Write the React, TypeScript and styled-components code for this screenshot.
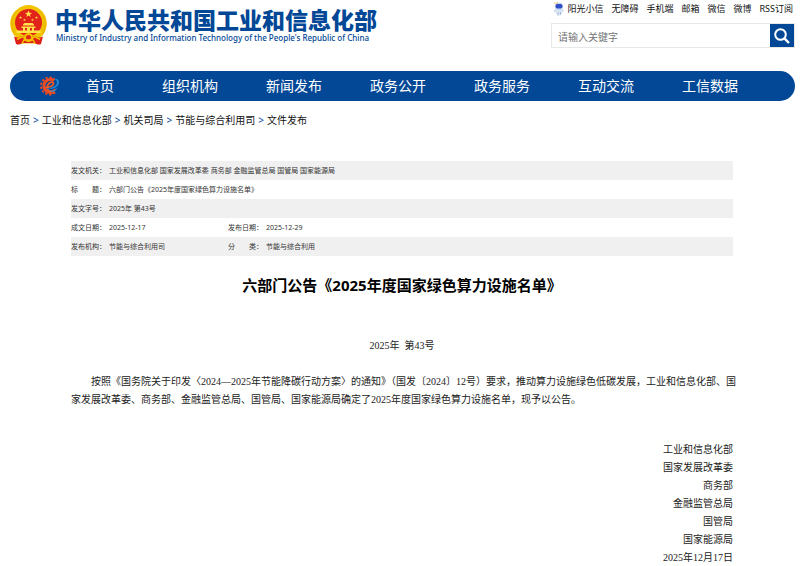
import React from "react";
import styled, { createGlobalStyle } from "styled-components";

const BLUE = "#024897";
const SANS = '"Noto Sans", "Noto Sans CJK SC", sans-serif';
const SONG = '"Liberation Serif", "Noto Sans CJK SC", serif';

const GlobalStyle = createGlobalStyle`
  * { box-sizing: border-box; }
  body {
    margin: 0;
    background: #fff;
    color: #222;
    font-family: ${SANS};
  }
  a { color: inherit; text-decoration: none; }
`;

const Page = styled.div`
  padding: 0 5px 0 10px;
`;

const Header = styled.header`
  display: flex;
  justify-content: space-between;
  height: 71px;
`;

const Brand = styled.a`
  display: flex;
  gap: 8px;
  padding-top: 5px;
  color: ${BLUE};
`;

const BrandText = styled.span`
  display: flex;
  flex-direction: column;
  white-space: nowrap;
`;

const BrandName = styled.strong`
  font: 900 23px/28px "Noto Sans CJK SC", sans-serif;
`;

const BrandEnglish = styled.span`
  padding-left: 1px;
  font: 500 8px/10px "Noto Sans", sans-serif;
`;

const Tools = styled.div`
  width: 244px;
`;

const Links = styled.nav`
  display: flex;
  justify-content: flex-end;
  align-items: center;
  gap: 8px;
  height: 17px;
  margin: 0 2px 6px 0;
  font-size: 9px;
  line-height: 16px;
  white-space: nowrap;
  color: #111;
`;

const MascotLink = styled.a`
  display: flex;
  align-items: center;
  gap: 3px;
`;

const Search = styled.form`
  display: flex;
  height: 25px;
  border: 1px solid #e8e8e8;
`;

const SearchInput = styled.input`
  flex: 1;
  min-width: 0;
  border: 0;
  outline: 0;
  padding: 2px 6px 0;
  font: 10px/18px ${SANS};
  &::placeholder { color: #757575; opacity: 1; }
`;

const SearchButton = styled.button`
  display: grid;
  place-items: center;
  width: 24px;
  padding: 0;
  border: 0;
  background: ${BLUE};
`;

const MainNav = styled.nav`
  display: flex;
  align-items: center;
  gap: 26px;
  height: 30px;
  padding-left: 29px;
  border-radius: 15px;
  background: ${BLUE};
  color: #fff;
`;

const NavList = styled.div`
  display: flex;
  gap: 48px;
  font-size: 14px;
  line-height: 30px;
  white-space: nowrap;
`;

const Crumbs = styled.nav`
  display: flex;
  gap: 3px;
  margin: 11px 0 32px;
  font-size: 10px;
  line-height: 17px;
  color: #111;
`;

const Separator = styled.span`
  color: ${BLUE};
`;

const Article = styled.main`
  padding: 0 62px 0 61px;
`;

const Meta = styled.table`
  width: 100%;
  table-layout: fixed;
  border-collapse: collapse;
  font-size: 7px;
  line-height: 19px;
  color: #333;
`;

const MetaCol = styled.col<{ $width?: number }>`
  width: ${(p) => (p.$width ? `${p.$width}px` : "auto")};
`;

const MetaRow = styled.tr`
  height: 19px;
  &:nth-child(odd) { background: #f0f0f0; }
  th, td {
    padding: 0;
    text-align: left;
    font-weight: 400;
    white-space: nowrap;
  }
`;

const Title = styled.h1`
  margin: 17px 0 40px;
  font-size: 15px;
  line-height: 24px;
  font-weight: 700;
  text-align: center;
  color: #000;
`;

const Body = styled.div`
  font-family: ${SONG};
  font-size: 10px;
  line-height: 18px;
  color: #222;
`;

const IssueNumber = styled.p`
  margin: 0 0 18px;
  text-align: center;
`;

const Paragraph = styled.p`
  margin: 0 -5px 32px 0;
  text-indent: 20px;
`;

const Signatures = styled.div`
  display: flex;
  flex-direction: column;
  align-items: flex-end;
`;

const STAR = "M0-5 1.2-1.6 4.8-1.5 1.9.6 2.9 4 0 2-2.9 4-1.9.6-4.8-1.5-1.2-1.6Z";

const Emblem = () => (
  <svg width="37" height="40" viewBox="0 0 74 80" aria-hidden="true">
    <path d="M14 66C-4 52-4 22 14 9 27-3 47-3 60 9c18 13 18 43 0 57l-1 11H15Z" fill="#f2c400" />
    <path d="M10 60C0 45 2 22 17 10M64 60c10-15 8-38-7-50M7 50l6-3M5 38l7-1M8 26l6 2M67 50l-6-3M69 38l-7-1M66 26l-6 2" fill="none" stroke="#e3ab00" strokeWidth="1.4" />
    <path d="M8 63c7 3 10 3 14-1h30c4 4 7 4 14 1l-4 15c-5 2-9 1-12-2H24c-3 3-7 4-12 2Z" fill="#de2019" />
    <circle cx="37" cy="35" r="27" fill="#e2231a" />
    <g fill="#ffe34a">
      <path d={STAR} transform="translate(37 18) scale(1.5)" />
      <path d={STAR} transform="translate(21 25) scale(.65)" />
      <path d={STAR} transform="translate(29 30) scale(.6)" />
      <path d={STAR} transform="translate(45 30) scale(.6)" />
      <path d={STAR} transform="translate(53 25) scale(.65)" />
      <path d="M26 39l3-3h16l3 3v2H26ZM23 43h28v3H23ZM26 46h4v5h-4ZM34 46h6v5h-6ZM44 46h4v5h-4ZM13 51h48v5H13Z" />
    </g>
    <circle cx="37" cy="65" r="9" fill="#f2c400" />
    <circle cx="37" cy="65" r="5" fill="#e2231a" />
    <path d="M14 69l11-6 5 5M60 69l-11-6-5 5M24 77l4-7h18l4 7" fill="none" stroke="#f2c400" strokeWidth="3" />
  </svg>
);

const GearLogo = () => (
  <svg width="21" height="20" viewBox="0 0 42 40" aria-hidden="true">
    <path d="M31 30A13 13 0 1 1 30 9" fill="none" stroke="#ee4b23" strokeWidth="6" />
    <path d="M32 33A17 17 0 1 1 31 6" fill="none" stroke="#ee4b23" strokeWidth="4" strokeDasharray="4.5 3.5" />
    <path d="M12 23c8 0 17-3 17-8 0-3-4-4-8-1-5 4-7 11-2 15 5 3 11 0 14-3" fill="none" stroke="#f05a24" strokeWidth="3.5" />
    <path d="M15 24c12 1 22-5 21-12 0-3-3-5-6-5 6-3 10 0 10 5 0 10-13 17-25 12Z" fill="#2089d6" />
    <path d="M20 29c7 2 14-2 17-7-2 8-9 13-17 7Z" fill="#2089d6" />
  </svg>
);

const Mascot = () => (
  <svg width="10" height="14" viewBox="0 0 20 28" aria-hidden="true">
    <path d="M5 15h10l2 7-4 5H8l-5-5Z" fill="#dce7f6" />
    <path d="M3 15l-2 5M16 15l3 4M8 20v7M13 20v5" stroke="#9db9df" strokeWidth="2" />
    <circle cx="10" cy="9" r="8" fill="#c9daf5" />
    <rect x="3" y="4" width="14" height="9" rx="4" fill="#304fc9" />
    <path d="M3 4l-2-3M4 3l4-2" stroke="#e9bd66" strokeWidth="2" />
  </svg>
);

const SearchIcon = () => (
  <svg width="16" height="16" viewBox="0 0 16 16" fill="none" stroke="#fff" strokeWidth="2" aria-hidden="true">
    <circle cx="6.5" cy="6.5" r="5.3" />
    <path d="M10.4 10.4 15 15" strokeWidth="2.4" />
  </svg>
);

const topLinks = ["无障碍", "手机端", "邮箱", "微信", "微博", "RSS订阅"];
const sections = ["首页", "组织机构", "新闻发布", "政务公开", "政务服务", "互动交流", "工信数据"];
const crumbs = ["首页", "工业和信息化部", "机关司局", "节能与综合利用司", "文件发布"];
const metaRows = [
  ["发文机关：", "工业和信息化部 国家发展改革委 商务部 金融监管总局 国管局 国家能源局"],
  ["标　　题：", "六部门公告《2025年度国家绿色算力设施名单》"],
  ["发文字号：", "2025年 第43号"],
  ["成文日期：", "2025-12-17", "发布日期：", "2025-12-29"],
  ["发布机构：", "节能与综合利用司", "分　　类：", "节能与综合利用"],
];
const signers = ["工业和信息化部", "国家发展改革委", "商务部", "金融监管总局", "国管局", "国家能源局", "2025年12月17日"];

export default function App() {
  return (
    <>
      <GlobalStyle />
      <Page lang="zh-CN">
        <Header>
          <Brand href="#">
            <Emblem />
            <BrandText>
              <BrandName>中华人民共和国工业和信息化部</BrandName>
              <BrandEnglish>Ministry of Industry and Information Technology of the People's Republic of China</BrandEnglish>
            </BrandText>
          </Brand>
          <Tools>
            <Links>
              <MascotLink href="#"><Mascot />阳光小信</MascotLink>
              {topLinks.map((t) => <a href="#" key={t}>{t}</a>)}
            </Links>
            <Search>
              <SearchInput type="text" placeholder="请输入关键字" aria-label="请输入关键字" />
              <SearchButton type="button" aria-label="搜索"><SearchIcon /></SearchButton>
            </Search>
          </Tools>
        </Header>
        <MainNav>
          <GearLogo />
          <NavList>
            {sections.map((s) => <a href="#" key={s}>{s}</a>)}
          </NavList>
        </MainNav>
        <Crumbs>
          {crumbs.map((c, i) => (
            <React.Fragment key={c}>
              {i > 0 && <Separator>&gt;</Separator>}
              <a href="#">{c}</a>
            </React.Fragment>
          ))}
        </Crumbs>
        <Article>
          <Meta>
            <colgroup>
              <MetaCol $width={38} />
              <MetaCol $width={119} />
              <MetaCol $width={38} />
              <MetaCol />
            </colgroup>
            <tbody>
              {metaRows.map(([label, value, label2, value2]) => (
                <MetaRow key={label}>
                  <th scope="row">{label}</th>
                  <td colSpan={label2 ? 1 : 3}>{value}</td>
                  {label2 && <th scope="row">{label2}</th>}
                  {label2 && <td>{value2}</td>}
                </MetaRow>
              ))}
            </tbody>
          </Meta>
          <Title>六部门公告《2025年度国家绿色算力设施名单》</Title>
          <Body>
            <IssueNumber>2025年&nbsp;&nbsp;第43号</IssueNumber>
            <Paragraph>
              按照《国务院关于印发〈2024—2025年节能降碳行动方案〉的通知》（国发〔2024〕12号）要求，推动算力设施绿色低碳发展，工业和信息化部、国家发展改革委、商务部、金融监管总局、国管局、国家能源局确定了2025年度国家绿色算力设施名单，现予以公告。
            </Paragraph>
            <Signatures>
              {signers.map((s) => <span key={s}>{s}</span>)}
            </Signatures>
          </Body>
        </Article>
      </Page>
    </>
  );
}
